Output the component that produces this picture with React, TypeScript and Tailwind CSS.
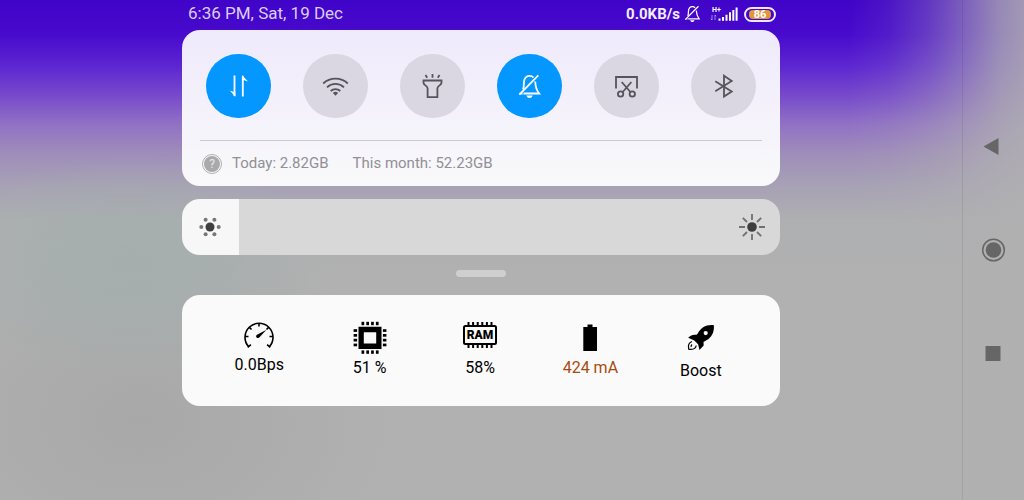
import { useState } from "react";
import type { ReactNode } from "react";
import clsx from "clsx";

function Stroke({ children }: { children: ReactNode }) {
  return (
    <svg
      viewBox="0 0 28 28"
      className="h-7 w-7"
      fill="none"
      stroke="currentColor"
      strokeWidth="1.8"
      aria-hidden="true"
    >
      {children}
    </svg>
  );
}

function BellOffPaths() {
  return (
    <>
      <path d="M7 17.500c.9-2 .9-3.800.9-6.500C7.900 6.500 10 3.800 13.500 3.800c1.700 0 3 .6 4 1.700M19.200 9.500c.2 5.500.7 8 4 12H7.500" />
      <path d="M22.300 3.300 3.300 22.600M3.500 21.500h3" />
      <path d="M10.300 23.400h6.400c-.6 1.700-1.700 2.500-3.200 2.500s-2.600-.8-3.200-2.500z" fill="currentColor" stroke="none" />
    </>
  );
}

const tiles = [
  {
    name: "Mobile data",
    on: true,
    icon: (
      <Stroke>
        <path d="M9.500 3.500V24M17.800 24.500V4" />
        <path d="M10.300 25V20.500L4.800 18.500zM17 3v4.500l6 2z" fill="currentColor" stroke="none" />
      </Stroke>
    ),
  },
  {
    name: "Wi-Fi",
    on: false,
    icon: (
      <Stroke>
        <path d="M1.200 11.500a18 18 0 0 1 24.600 0M5 15.300a12.500 12.500 0 0 1 17 0M8.700 19a7 7 0 0 1 9.600 0" />
        <path d="M13.500 23.700l-2.600-2.600a3.700 3.700 0 0 1 5.200 0z" fill="currentColor" stroke="none" />
      </Stroke>
    ),
  },
  {
    name: "Flashlight",
    on: false,
    icon: (
      <Stroke>
        <path d="M6.500 3l1.700 2.700M13.500 2v3.700M20.500 3l-1.700 2.700" />
        <path d="M4.500 8.500h18v2.300c0 2.600-4.100 2.600-4.100 5.700v8.700H8.600v-8.700c0-3.100-4.100-3.100-4.100-5.700z" />
      </Stroke>
    ),
  },
  {
    name: "Silent",
    on: true,
    icon: (
      <Stroke>
        <BellOffPaths />
      </Stroke>
    ),
  },
  {
    name: "Screenshot",
    on: false,
    icon: (
      <Stroke>
        <path d="M3 16.500V5h21v11.500" />
        <path d="M8.700 10l8.700 10M18.400 10l-8.700 10" />
        <circle cx="7.600" cy="22" r="2.700" />
        <circle cx="19.300" cy="22" r="2.700" />
      </Stroke>
    ),
  },
  {
    name: "Bluetooth",
    on: false,
    icon: (
      <Stroke>
        <path d="M5.300 9.300l16.400 10.200-7.700 5V3.700l7.700 5.300L5.300 19.200" />
      </Stroke>
    ),
  },
];

const pins = [0, 1, 2, 3];

const stats = [
  {
    label: "0.0Bps",
    color: "text-black",
    icon: (
      <svg viewBox="0 0 32 32" className="h-8 w-8" fill="none" stroke="currentColor" strokeWidth="1.600" aria-hidden="true">
        <path d="M5.700 25.800A14 14 0 1 1 26.300 25.800" />
        <path d="M4.700 26.300l3.200-2.600M27.300 26.300l-3.200-2.600M2 15.500h3.500M30 15.500h-3.500M16 2v3.500M6.400 6.400l2.100 2.100M25.600 6.400l-2.100 2.100" />
        <path d="M23.500 8.800l-9.500 5c-2 1.600-.2 4.200 2 2.900z" fill="currentColor" stroke="none" />
      </svg>
    ),
  },
  {
    label: "51 %",
    color: "text-black",
    icon: (
      <svg viewBox="0 0 34 35" className="h-[35px] w-[34px]" fill="currentColor" aria-hidden="true">
        <path d="M5.500 5.700h23v22.300h-23zM10.800 11.200v11.300h12.400V11.200z" fillRule="evenodd" />
        {pins.map((i) => (
          <g key={i}>
            <rect x={8.5 + i * 4.8} y="0.8" width="2.7" height="3.4" />
            <rect x={8.5 + i * 4.8} y="29.4" width="2.7" height="3.4" />
            <rect x="0.6" y={8.2 + i * 4.8} width="3.5" height="2.7" />
            <rect x="29.9" y={8.2 + i * 4.8} width="3.5" height="2.7" />
          </g>
        ))}
      </svg>
    ),
  },
  {
    label: "58%",
    color: "text-black",
    icon: (
      <svg viewBox="0 0 36 35" className="h-[35px] w-9" fill="none" stroke="currentColor" strokeWidth="2" aria-hidden="true">
        <rect x="2" y="5" width="32" height="18" rx="1.5" />
        <path d="M6.500 1v4M11.100 1v4M15.700 1v4M20.300 1v4M24.900 1v4M29.500 1v4M6.500 23v4M11.100 23v4M15.700 23v4M20.300 23v4M24.900 23v4M29.500 23v4" />
        <text x="18" y="18" textAnchor="middle" fill="currentColor" stroke="none" className="text-[12px] font-black">
          RAM
        </text>
      </svg>
    ),
  },
  {
    label: "424 mA",
    color: "text-[#a84a10]",
    icon: (
      <svg viewBox="0 0 32 35" className="h-[35px] w-8" fill="currentColor" aria-hidden="true">
        <path d="M13.500 3.500h5v2.600H23V30H9.300V6.100h4.200z" />
      </svg>
    ),
  },
  {
    label: "Boost",
    color: "text-black",
    icon: (
      <svg viewBox="0 0 32 38" className="h-[38px] w-8" fill="currentColor" aria-hidden="true">
        <path
          fillRule="evenodd"
          d="M28.900 4.200c.4 5.500-1.200 10.300-5.400 13.700l-5 3 .2 3.600-4.200 4.600-1.400-5.800-3.800-3.900-6.200-2.600c2.500-2.800 5-3.400 8.400-3l1.300-1.200C15.800 6.500 21 3.400 28.900 4.200zM20.700 10a2.100 2.100 0 1 0 0 4.200 2.100 2.100 0 0 0 0-4.200z"
        />
        <path d="M7 20.500c-3 1-4.200 3.800-3.300 7.700 3.900.6 7-.5 7.500-3.700M7 23.500c-.8.8-1.200 1.700-.8 2.500" fill="none" stroke="currentColor" strokeWidth="1.2" />
      </svg>
    ),
  },
];

function StatusBar() {
  return (
    <header className="flex h-[30px] items-center justify-between pr-1 pb-0.5 pl-1.5 text-white">
      <time className="text-[17px] text-[#dccdf8]">6:36 PM, Sat, 19 Dec</time>
      <div className="flex items-center">
        <span className="text-[15px] font-bold text-[#f3ecff]">0.0KB/s</span>
        <svg viewBox="2 3 22 23" className="ml-1 h-4 w-4" fill="none" stroke="currentColor" strokeWidth="1.8" aria-hidden="true">
          <BellOffPaths />
        </svg>
        <svg viewBox="0 0 28 16" className="ml-2.5 h-4 w-7" fill="currentColor" aria-hidden="true">
          <text x="2" y="6" className="text-[7px] font-bold">
            H+
          </text>
          <path d="M2 9v5M.8 12.700 2 14M5 14V9l1.200 1.300" fill="none" stroke="currentColor" strokeWidth="0.7" opacity="0.7" />
          <path d="M8.500 12.500h2v2.200h-2zM12 11h2v3.700h-2zM15.500 8.800h2v5.900h-2zM19 6.300h2v8.400h-2zM22.300 4h2v10.700h-2zM25.600 1.500h2v13.200h-2z" />
        </svg>
        <span className="ml-1.5 flex h-[15px] w-8 rounded-full border-2 border-[#eee6ff] px-[3px] py-px">
          <span className="flex flex-1 items-center justify-center rounded-sm bg-[#df963c] text-[11px] leading-none font-bold">
            86
          </span>
        </span>
      </div>
    </header>
  );
}

function QuickSettings() {
  const [active, setActive] = useState(tiles.map((tile) => tile.on));

  return (
    <section className="rounded-[18px] bg-linear-to-b from-[#efeafc] via-[#f4f1fb] to-[#f9f9fa] pt-6">
      <div className="flex justify-between px-6">
        {tiles.map((tile, index) => (
          <button
            key={tile.name}
            type="button"
            aria-label={tile.name}
            aria-pressed={active[index]}
            onClick={() => setActive(active.map((on, i) => (i === index ? !on : on)))}
            className={clsx(
              "flex h-16 w-[65px] items-center justify-center rounded-full",
              active[index] ? "bg-[#0397ff] text-white" : "bg-[#dad7e2] text-[#56545b]"
            )}
          >
            {tile.icon}
          </button>
        ))}
      </div>
      <div className="mx-[18px] mt-[22px] flex h-[46px] items-center border-t border-[#cbc9d1] text-[15px] text-[#919095]">
        <button
          type="button"
          aria-label="Data usage help"
          className="ml-0.5 flex h-5 w-5 items-center justify-center rounded-full border border-[#b0b0b2] p-px"
        >
          <span className="flex h-4 w-4 items-center justify-center rounded-full bg-[#a9a9ab] text-xs leading-none text-[#e8e8ea]">
            ?
          </span>
        </button>
        <span className="ml-2.5">Today: 2.82GB</span>
        <span className="ml-6">This month: 52.23GB</span>
      </div>
    </section>
  );
}

function Brightness() {
  const [level, setLevel] = useState(19);
  const fill = `${level / 2}%`;

  return (
    <div className="relative mt-[13px]">
      <input
        type="range"
        min="0"
        max="200"
        value={level}
        onChange={(event) => setLevel(Number(event.target.value))}
        aria-label="Brightness"
        className="block h-14 w-full appearance-none rounded-[18px] [&::-webkit-slider-thumb]:appearance-none"
        style={{ background: `linear-gradient(to right, #f7f7f7 ${fill}, #d8d8d9 ${fill})` }}
      />
      <div className="pointer-events-none absolute inset-0 flex items-center justify-between px-3.5 text-[#3f3f3f]">
        <svg viewBox="-14 -14 28 28" className="h-7 w-7" fill="currentColor" aria-hidden="true">
          <circle r="4.5" />
          <g fill="#777">
            <circle cx="-8.7" r="2" />
            <circle cx="8.7" r="2" />
            <circle cx="-4.4" cy="-7.3" r="2" />
            <circle cx="4.4" cy="-7.3" r="2" />
            <circle cx="-4.4" cy="7.3" r="2" />
            <circle cx="4.4" cy="7.3" r="2" />
          </g>
        </svg>
        <svg viewBox="-14 -14 28 28" className="h-7 w-7" fill="currentColor" aria-hidden="true">
          <circle r="4.8" />
          <path
            d="M0-13v6M0 13V7M-13 0h6M13 0H7M-9.200-9.200l4.200 4.200M9.200 9.200 5 5M-9.200 9.200-5 5M9.200-9.200 5-5"
            stroke="#707070"
            strokeWidth="1.8"
          />
        </svg>
      </div>
    </div>
  );
}

function SystemStats() {
  return (
    <section className="mt-[18px] grid grid-cols-5 rounded-[18px] bg-[#fafafa] pt-[26px] pr-6 pb-[23px] pl-[22px]">
      {stats.map((stat) => (
        <div key={stat.label} className="flex flex-col items-center text-black">
          {stat.icon}
          <span className={clsx("text-base", stat.color)}>{stat.label}</span>
        </div>
      ))}
    </section>
  );
}

function NavigationBar() {
  return (
    <nav className="flex w-[62px] flex-col items-center justify-center gap-20 border-l border-black/8 text-[#666]">
      <button type="button" aria-label="Back">
        <svg viewBox="0 0 24 24" className="h-6 w-6" fill="currentColor" aria-hidden="true">
          <path d="M1.500 12.500 16.500 4v17z" />
        </svg>
      </button>
      <button type="button" aria-label="Home">
        <svg viewBox="0 0 24 24" className="h-6 w-6" fill="currentColor" aria-hidden="true">
          <circle cx="11.5" cy="12" r="10.8" fill="none" stroke="currentColor" strokeWidth="1.5" />
          <circle cx="11.5" cy="12" r="7.8" />
        </svg>
      </button>
      <button type="button" aria-label="Recent apps">
        <svg viewBox="0 0 24 24" className="h-6 w-6" fill="currentColor" aria-hidden="true">
          <rect x="3.5" y="4" width="15" height="15" rx="0.5" />
        </svg>
      </button>
    </nav>
  );
}

export default function App() {
  return (
    <div className="flex min-h-screen bg-[linear-gradient(to_left,#b0b0b1dc_0,#b0b0b1c4_25px,#b0b0b188_60px,#b0b0b14d_95px,#b0b0b11a_135px,#b0b0b100_175px),radial-gradient(ellipse_200px_110px_at_130px_265px,#a2aeadcc_0%,#a2aead80_50%,#a2aead00_100%),radial-gradient(ellipse_260px_190px_at_140px_420px,#a8a8a8_0%,#a8a8a800_100%),linear-gradient(to_bottom,#4003c8_0,#480bcd_35px,#5c25d1_65px,#7649cb_95px,#9071c4_124px,#9e8cba_152px,#a7a1b5_185px,#aeafb1_220px,#b1b1b1_280px)] font-['Roboto',sans-serif]">
      <main className="flex-1">
        <div className="mx-auto max-w-[598px]">
          <StatusBar />
          <QuickSettings />
          <Brightness />
          <div className="mx-auto mt-[15px] h-[7px] w-[50px] rounded-full bg-[#cfcfcf]" />
          <SystemStats />
        </div>
      </main>
      <NavigationBar />
    </div>
  );
}
